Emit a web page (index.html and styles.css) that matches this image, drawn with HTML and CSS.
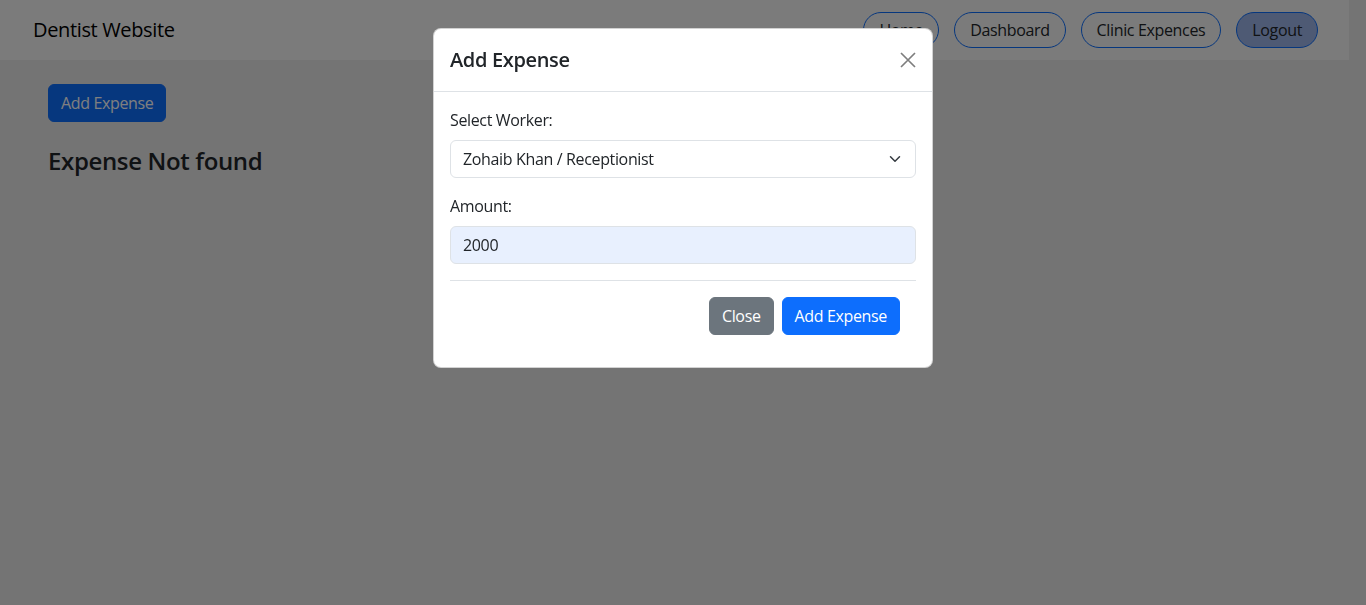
FILE: index.html
```html
<!DOCTYPE html>
<html lang="en">
<head>
<meta charset="utf-8">
<title>Dentist Website</title>
<link rel="stylesheet" href="styles.css">
</head>
<body>
<nav class="navbar">
  <span class="brand">Dentist Website</span>
  <div class="nav-links">
    <a class="pill" href="#">Home</a>
    <a class="pill" href="#">Dashboard</a>
    <a class="pill" href="#">Clinic Expences</a>
    <a class="pill pill-active" href="#">Logout</a>
  </div>
</nav>
<main class="content">
  <button class="btn btn-primary">Add Expense</button>
  <h3 class="empty">Expense Not found</h3>
</main>
<div class="backdrop"></div>
<div class="modal-wrap">
  <div class="modal">
    <div class="modal-header">
      <h5 class="modal-title">Add Expense</h5>
      <button class="btn-close" aria-label="Close">
        <svg width="16" height="16" viewBox="0 0 16 16"><path d="M1 1 15 15M15 1 1 15" stroke="#000" stroke-width="1.7" fill="none"/></svg>
      </button>
    </div>
    <div class="modal-body">
      <label class="form-label">Select Worker:</label>
      <div class="form-select">
        <span>Zohaib Khan / Receptionist</span>
        <svg width="16" height="12" viewBox="0 0 16 16"><path d="m2 5 6 6 6-6" stroke="#343a40" stroke-width="2" stroke-linecap="round" stroke-linejoin="round" fill="none"/></svg>
      </div>
      <label class="form-label">Amount:</label>
      <input class="form-control" type="text" value="2000">
      <div class="modal-footer">
        <button class="btn btn-secondary">Close</button>
        <button class="btn btn-primary">Add Expense</button>
      </div>
    </div>
  </div>
</div>
</body>
</html>
```
FILE: styles.css
```css
* { box-sizing: border-box; }
html, body { margin: 0; height: 100%; }
body {
  font-family: "Open Sans", "Noto Sans", sans-serif;
  font-size: 16px;
  line-height: 1.5;
  letter-spacing: -0.022em;
  color: #212529;
  background: #e8e8e8;
  padding-right: 17px;
  overflow: hidden;
}
button, input { letter-spacing: inherit; }
.navbar {
  height: 60px;
  background: #f6f6f6;
  display: flex;
  align-items: center;
  justify-content: space-between;
  padding: 0 31px 0 33px;
}
.brand { font-size: 20px; color: #000; }
.nav-links { display: flex; gap: 15px; }
.pill {
  display: inline-flex;
  align-items: center;
  height: 36px;
  padding: 0 15px;
  border: 1px solid #0d6efd;
  border-radius: 18px;
  color: #212529;
  text-decoration: none;
}
.pill-active { background: #9cb4e8; }
.content { padding: 24px 48px; }
.btn {
  font-family: inherit;
  font-size: 16px;
  line-height: 24px;
  padding: 6px 12px;
  border: 1px solid transparent;
  border-radius: 6px;
  color: #fff;
  cursor: pointer;
}
.btn-primary { background: #0d6efd; border-color: #0d6efd; }
.btn-secondary { background: #6c757d; border-color: #6c757d; }
.empty { margin: 25px 0 0; font-size: 24px; font-weight: 600; line-height: 1.2; }
.backdrop {
  position: fixed;
  inset: 0;
  background: rgba(0, 0, 0, 0.5);
}
.modal-wrap {
  position: fixed;
  inset: 0;
  display: flex;
  justify-content: center;
  align-items: flex-start;
  padding-top: 28px;
}
.modal {
  width: 500px;
  background: #fff;
  border: 1px solid rgba(0, 0, 0, 0.175);
  border-radius: 8px;
}
.modal-header {
  display: flex;
  align-items: center;
  justify-content: space-between;
  padding: 16px;
  border-bottom: 1px solid #dee2e6;
}
.modal-title { margin: 0; font-size: 20px; font-weight: 600; line-height: 30px; }
.btn-close {
  width: 24px;
  height: 24px;
  padding: 4px;
  margin-right: -4px;
  border: 0;
  background: none;
  opacity: 0.5;
  display: flex;
}
.modal-body { padding: 16px; }
.form-label { display: block; margin-bottom: 8px; }
.form-select {
  display: flex;
  align-items: center;
  justify-content: space-between;
  height: 38px;
  padding: 0 12px;
  border: 1px solid #dee2e6;
  border-radius: 6px;
  margin-bottom: 16px;
}
.form-control {
  display: block;
  width: 100%;
  height: 38px;
  padding: 6px 12px;
  font-family: inherit;
  font-size: 16px;
  color: #212529;
  background: #e8f0fe;
  border: 1px solid #dee2e6;
  border-radius: 6px;
  margin-bottom: 16px;
}
.modal-footer {
  display: flex;
  justify-content: flex-end;
  gap: 8px;
  padding: 12px;
  border-top: 1px solid #dee2e6;
}
.modal-footer .btn { margin: 4px 0; }
.modal-footer .btn:last-child { margin-right: 4px; }
```
